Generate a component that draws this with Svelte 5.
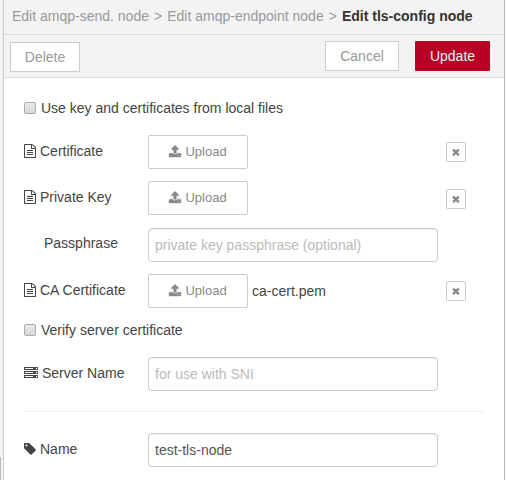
<script>
  const icons = {
    file: { w: 1536, d: 'M1468 380q28 28 48 76t20 88v1152q0 40-28 68t-68 28h-1344q-40 0-68-28t-28-68v-1600q0-40 28-68t68-28h896q40 0 88 20t76 48zm-444-244v376h376q-10-29-22-41l-313-313q-12-12-41-22zm384 1528v-1024h-416q-40 0-68-28t-28-68v-416h-768v1536h1280zm-1024-864q0-14 9-23t23-9h704q14 0 23 9t9 23v64q0 14-9 23t-23 9h-704q-14 0-23-9t-9-23v-64zm736 224q14 0 23 9t9 23v64q0 14-9 23t-23 9h-704q-14 0-23-9t-9-23v-64q0-14 9-23t23-9h704zm0 256q14 0 23 9t9 23v64q0 14-9 23t-23 9h-704q-14 0-23-9t-9-23v-64q0-14 9-23t23-9h704z' },
    upload: { w: 1664, d: 'M1280 1472q0-26-19-45t-45-19-45 19-19 45 19 45 45 19 45-19 19-45zm256 0q0-26-19-45t-45-19-45 19-19 45 19 45 45 19 45-19 19-45zm128-224v320q0 40-28 68t-68 28h-1472q-40 0-68-28t-28-68v-320q0-40 28-68t68-28h427q21 56 70.5 92t110.5 36h256q61 0 110.5-36t70.5-92h427q40 0 68 28t28 68zm-325-648q-17 40-59 40h-256v448q0 26-19 45t-45 19h-256q-26 0-45-19t-19-45v-448h-256q-42 0-59-40-17-39 14-69l448-448q18-19 45-19t45 19l448 448q31 30 14 69z' },
    server: { w: 1792, d: 'M128 1408h1024v-128h-1024v128zm0-512h1024v-128h-1024v128zm1568 448q0-40-28-68t-68-28-68 28-28 68 28 68 68 28 68-28 28-68zm-1568-960h1024v-128h-1024v128zm1568 448q0-40-28-68t-68-28-68 28-28 68 28 68 68 28 68-28 28-68zm0-512q0-40-28-68t-68-28-68 28-28 68 28 68 68 28 68-28 28-68zm96 832v384h-1792v-384h1792zm0-512v384h-1792v-384h1792zm0-512v384h-1792v-384h1792z' },
    tag: { w: 1536, d: 'M448 448q0-53-37.5-90.5t-90.5-37.5-90.5 37.5-37.5 90.5 37.5 90.5 90.5 37.5 90.5-37.5 37.5-90.5zm1067 576q0 53-37 90l-491 492q-39 37-91 37-53 0-90-37l-715-716q-38-37-64.5-101t-26.5-117v-416q0-52 38-90t90-38h416q53 0 117 26.5t102 64.5l715 714q37 39 37 91z' },
    remove: { w: 1408, d: 'M1298 1322q0 40-28 68l-136 136q-28 28-68 28t-68-28l-294-294-294 294q-28 28-68 28t-68-28l-136-136q-28-28-28-68t28-68l294-294-294-294q-28-28-28-68t28-68l136-136q28-28 68-28t68 28l294 294 294-294q28-28 68-28t68 28l136 136q28 28 28 68t-28 68l-294 294 294 294q28 28 28 68z' }
  };
  let name = $state('test-tls-node');
</script>

{#snippet icon(key, size)}
  <svg class="icon" width={(icons[key].w / 1792) * size} height={size} viewBox="0 0 {icons[key].w} 1792" aria-hidden="true"><path d={icons[key].d} /></svg>
{/snippet}

{#snippet certRow(label, cls, filename)}
  <div class="row {cls}">
    <div class="label">{@render icon('file', 14)}<span>{label}</span></div>
    <button class="upload">{@render icon('upload', 13)}<span>Upload</span></button>
    <span class="filename">{filename}</span>
    <button class="remove" aria-label="Remove">{@render icon('remove', 10)}</button>
  </div>
{/snippet}

<div class="page">
  <div class="gutter"><div class="stub"></div></div>
  <div class="panel">
    <header class="crumbs">Edit amqp-send. node <span class="sep">&gt;</span> Edit amqp-endpoint node <span class="sep">&gt;</span> <b>Edit tls-config node</b></header>
    <div class="toolbar">
      <button class="btn delete">Delete</button>
      <button class="btn cancel">Cancel</button>
      <button class="btn update">Update</button>
    </div>
    <form class="form">
      <label class="check first"><input type="checkbox" /><span>Use key and certificates from local files</span></label>
      {@render certRow('Certificate', 'cert', '')}
      {@render certRow('Private Key', 'key', '')}
      <div class="row pass">
        <div class="label"><span>Passphrase</span></div>
        <input class="text" type="text" placeholder="private key passphrase (optional)" />
      </div>
      {@render certRow('CA Certificate', 'ca', 'ca-cert.pem')}
      <label class="check"><input type="checkbox" /><span>Verify server certificate</span></label>
      <div class="row server">
        <div class="label">{@render icon('server', 14)}<span>Server Name</span></div>
        <input class="text" type="text" placeholder="for use with SNI" />
      </div>
      <hr />
      <div class="row name">
        <div class="label">{@render icon('tag', 14)}<span>Name</span></div>
        <input class="text" type="text" bind:value={name} />
      </div>
    </form>
  </div>
</div>

<style>
  .page {
    display: flex;
    width: 506px;
    height: 480px;
    overflow: hidden;
    background: #f3f3f3;
    color: #444;
    font: 14px/20px "Liberation Sans", Arial, sans-serif;
  }
  .page *, .page { box-sizing: border-box; }
  button, input { font-family: inherit; margin: 0; }
  .gutter { display: flex; align-items: flex-end; width: 3px; }
  .stub { width: 1px; height: 23px; background: #bbb; }
  .panel {
    width: 502px;
    border-left: 1px solid #ccc;
    border-right: 1px solid #bbb;
    background: #fff;
  }
  .crumbs {
    height: 35px;
    padding: 6px 0 0 8px;
    background: #f3f3f3;
    border-bottom: 1px solid #ddd;
    color: #999;
    white-space: nowrap;
  }
  .crumbs b { color: #333; }
  .sep { margin: 0 1.15px; }
  .toolbar {
    display: flex;
    align-items: flex-start;
    height: 43px;
    padding: 6px 14px 0 6px;
    background: #f3f3f3;
    border-bottom: 1px solid #ddd;
  }
  .btn {
    height: 30px;
    padding: 0;
    border: 1px solid #ccc;
    background: #fff;
    color: #999;
    font-size: 14px;
    line-height: 28px;
  }
  .delete { width: 70px; margin: 1px auto 0 0; }
  .cancel { width: 74px; margin-right: 16px; }
  .update { width: 75px; border-color: #b80024; border-radius: 1px; background: #b80024; color: #eee; }
  .form { display: flex; flex-direction: column; padding: 0 20px; margin: 0; }
  .check { display: flex; height: 20px; padding-top: 0; margin-top: 12px; }
  .check.first { margin-top: 20px; }
  .check input {
    appearance: none;
    width: 12px;
    height: 12px;
    margin: 4px 5px 0 0;
    border: 1px solid #aaa;
    border-radius: 2px;
    background: linear-gradient(#e8e8e8, #d9d9d9);
  }
  .row { display: flex; align-items: flex-start; height: 34px; margin-top: 12px; }
  .cert { margin-top: 17px; }
  .pass { margin-top: 13px; }
  .server { margin-top: 17px; }
  .name { margin-top: 21px; }
  .label { display: flex; width: 124px; padding-top: 6px; white-space: nowrap; }
  .pass .label { padding: 5px 0 0 20px; }
  .icon { display: block; flex: none; fill: currentColor; overflow: visible; }
  .label .icon { margin: 3px 4px 0 0; }
  .upload {
    display: flex;
    justify-content: center;
    width: 100px;
    height: 34px;
    padding: 6px 0;
    border: 1px solid #ccc;
    border-radius: 2px;
    background: #fff;
    color: #888;
    font-size: 13px;
    line-height: 20px;
  }
  .upload .icon { margin: 3px 4px 0 0; stroke: currentColor; stroke-width: 50; }
  .filename { flex: 1; padding: 7px 0 0 4px; }
  .remove {
    display: flex;
    align-items: center;
    justify-content: center;
    width: 20px;
    height: 20px;
    margin: 7px 18px 0 0;
    padding: 0 1px 1px 0;
    border: 1px solid #ccc;
    border-radius: 2px;
    background: #fff;
    color: #888;
  }
  .remove .icon { stroke: currentColor; stroke-width: 90; }
  .key .remove { margin-top: 8px; }
  .text {
    width: 290px;
    height: 34px;
    padding: 6px;
    border: 1px solid #ccc;
    border-radius: 4px;
    outline: 0;
    background: #fff;
    box-shadow: inset 0 1px 1px rgba(0, 0, 0, 0.075);
    color: #555;
    font-size: 14px;
    line-height: 20px;
  }
  .text::placeholder { color: #bbb; opacity: 1; }
  hr { width: 100%; height: 1px; margin: 20px 0 0; border: 0; background: #eee; }
</style>
